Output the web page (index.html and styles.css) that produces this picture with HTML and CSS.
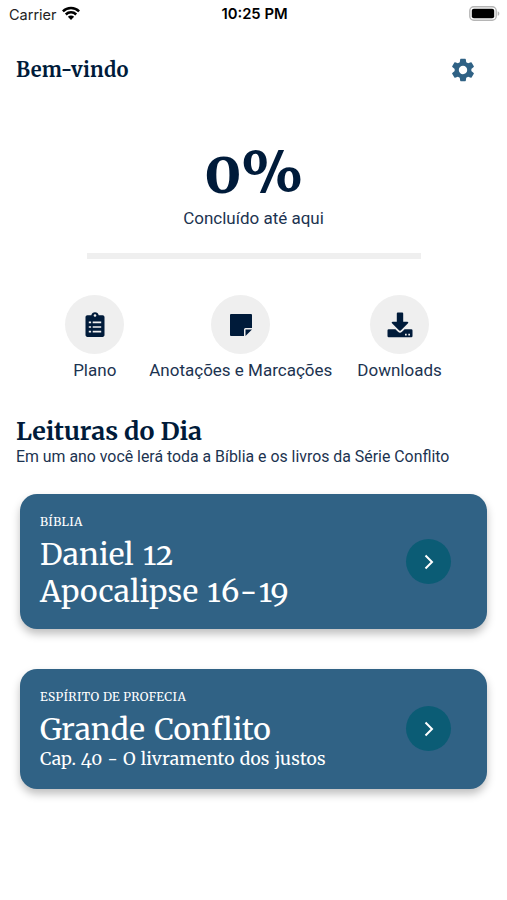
FILE: index.html
```html
<!DOCTYPE html>
<html lang="pt-BR">
<head>
  <meta charset="UTF-8">
  <meta name="viewport" content="width=device-width, initial-scale=1">
  <title>Bem-vindo</title>
  <link rel="stylesheet" href="styles.css">
</head>
<body>
  <div class="statusbar">
    <div class="carrier">
      <span>Carrier</span>
      <svg class="wifi" viewBox="0 0 18 14" fill="none" stroke="#000" stroke-width="2.5">
        <path d="M.9 5.3a11.5 11.5 0 0 1 16.2 0"/>
        <path d="M3.8 8.5a7.4 7.4 0 0 1 10.4 0"/>
        <path d="M9 14 5.9 10.8a4.4 4.4 0 0 1 6.2 0z" fill="#000" stroke="none"/>
      </svg>
    </div>
    <span class="time">10:25 PM</span>
    <svg class="battery" viewBox="0 0 31 15">
      <rect x=".8" y=".8" width="26.4" height="13.4" rx="4" fill="#fff" stroke="#b5b5b5" stroke-width="1.4"/>
      <rect x="2.8" y="2.8" width="22.4" height="9.4" rx="2" fill="#000"/>
      <path d="M28.7 5.2c2.2.9 2.2 3.7 0 4.6z" fill="#b5b5b5"/>
    </svg>
  </div>

  <header class="header">
    <h1>Bem-vindo</h1>
    <svg class="gear" viewBox="0 0 24 24" fill="#306285">
      <path d="M19.14 12.94c.04-.3.06-.61.06-.94 0-.32-.02-.64-.07-.94l2.03-1.58a.49.49 0 0 0 .12-.61l-1.92-3.32a.488.488 0 0 0-.59-.22l-2.39.96c-.5-.38-1.03-.7-1.62-.94l-.36-2.54a.484.484 0 0 0-.48-.41h-3.84c-.24 0-.43.17-.47.41l-.36 2.54c-.59.24-1.13.57-1.62.94l-2.39-.96c-.22-.08-.47 0-.59.22L2.74 8.87c-.12.21-.08.47.12.61l2.03 1.58c-.05.3-.09.63-.09.94s.02.64.07.94l-2.03 1.58a.49.49 0 0 0-.12.61l1.92 3.32c.12.22.37.29.59.22l2.39-.96c.5.38 1.03.7 1.62.94l.36 2.54c.05.24.24.41.48.41h3.84c.24 0 .44-.17.47-.41l.36-2.54c.59-.24 1.13-.56 1.62-.94l2.39.96c.22.08.47 0 .59-.22l1.92-3.32c.12-.22.07-.47-.12-.61l-2.01-1.58zM12 15.6A3.61 3.61 0 0 1 8.4 12c0-1.98 1.62-3.6 3.6-3.6s3.6 1.62 3.6 3.6-1.62 3.6-3.6 3.6z"/>
    </svg>
  </header>

  <section class="progress">
    <div class="percent">0%</div>
    <div class="done">Concluído até aqui</div>
    <div class="track"></div>
  </section>

  <nav class="menu">
    <div class="item">
      <div class="circle">
        <svg width="20" height="26" viewBox="0 0 20 26">
          <path fill="#001b3a" d="M2.4 3.2h3.9a3.8 3.8 0 0 1 7.4 0h3.9c1.1 0 1.9.8 1.9 1.9v18c0 1.1-.8 1.9-1.9 1.9H2.4C1.3 25 .5 24.2.5 23.1v-18c0-1.1.8-1.9 1.9-1.9z"/>
          <circle cx="10" cy="3.5" r="1.3" fill="#efefef"/>
          <path stroke="#efefef" stroke-width="1.7" d="M3.8 10.3h2.3M7.7 10.3h8.5M3.8 15h2.3M7.7 15h8.5M3.8 19.7h2.3M7.7 19.7h8.5"/>
        </svg>
      </div>
      <span>Plano</span>
    </div>
    <div class="item">
      <div class="circle">
        <svg width="22" height="22" viewBox="0 0 22 22" fill="#001b3a">
          <path d="M1 0h20q1 0 1 1v13h-6.5q-1.5 0-1.5 1.5V22H1q-1 0-1-1V1q0-1 1-1z"/>
          <path d="M15.5 15.5H22L15.5 22z"/>
        </svg>
      </div>
      <span>Anotações e Marcações</span>
    </div>
    <div class="item">
      <div class="circle">
        <svg width="26" height="26" viewBox="0 0 26 26" fill="#001b3a">
          <path d="M10.8.5h4.4q1 0 1 1v8.2h4.1c1 0 1.3.9.7 1.5l-7.2 7.2q-.8.8-1.6 0L5 11.2c-.6-.6-.3-1.5.7-1.5h4.1V1.5q0-1 1-1z"/>
          <path d="M1.7 17.3h6.7l2.6 2.5q2 1.8 4 0l2.6-2.5h6.7q1.2 0 1.2 1.2v5.6q0 1.2-1.2 1.2H1.7q-1.2 0-1.2-1.2v-5.6q0-1.2 1.2-1.2z"/>
          <path fill="#efefef" d="M18 21.7h1.7v1.7H18zM21.3 21.7H23v1.7h-1.7z"/>
        </svg>
      </div>
      <span>Downloads</span>
    </div>
  </nav>

  <section class="readings">
    <h2>Leituras do Dia</h2>
    <p class="intro">Em um ano você lerá toda a Bíblia e os livros da Série Conflito</p>

    <article class="card bible">
      <div class="text">
        <div class="label">BÍBLIA</div>
        <div class="title">Daniel 12<br>Apocalipse 1<span class="range">6-</span>19</div>
      </div>
      <div class="go">
        <svg viewBox="0 0 10 16"><path d="M1.5 1.5 8 8l-6.5 6.5"/></svg>
      </div>
    </article>

    <article class="card prophecy">
      <div class="text">
        <div class="label">ESPÍRITO DE PROFECIA</div>
        <div class="title">Grande Conflito</div>
        <div class="chapter">Cap. 40 - O livramento dos justos</div>
      </div>
      <div class="go">
        <svg viewBox="0 0 10 16"><path d="M1.5 1.5 8 8l-6.5 6.5"/></svg>
      </div>
    </article>
  </section>
</body>
</html>
```
FILE: styles.css
```css
* { box-sizing: border-box; }
body { margin: 0; background: #fff; color: #001b3a; font-family: Roboto, sans-serif; }
h1, h2, p { margin: 0; }
svg { display: block; }
h1, h2, .percent, .card { font-family: Merriweather, "DejaVu Serif Condensed", "DejaVu Serif", serif; font-variant-numeric: oldstyle-nums; }

.statusbar { display: grid; grid-template-columns: 1fr auto 1fr; align-items: center; height: 28px; padding: 0 7px 0 9px; color: #000; font-family: Inter, sans-serif; font-size: 14.5px; }
.carrier { display: flex; align-items: center; gap: 5px; color: #222; }
.wifi { width: 18px; height: 14px; margin-top: -2px; }
.time { font-weight: 600; font-size: 14.8px; }
.battery { width: 31px; height: 15px; margin-top: -2px; justify-self: end; }

.header { display: flex; justify-content: space-between; align-items: center; height: 83px; padding: 0 30px 0 16px; }
h1 { font-size: 20px; line-height: 28px; letter-spacing: 0.25px; }
.gear { width: 28px; height: 28px; }

.progress { display: flex; flex-direction: column; align-items: center; padding-top: 27px; }
.percent { height: 69px; font-size: 58px; line-height: 69px; font-weight: 800; }
.done { font-size: 17px; line-height: 22px; color: #1c3350; }
.track { width: 334px; height: 6px; margin-top: 24px; background: #efefef; }

.menu { display: flex; justify-content: center; gap: 25px; margin-top: 36px; }
.item { display: flex; flex-direction: column; align-items: center; font-size: 17px; line-height: 22px; min-width: 58px; color: #1c3350; }
.circle { display: flex; align-items: center; justify-content: center; width: 59px; height: 59px; margin-bottom: 5px; border-radius: 50%; background: #efefef; }

.readings { padding: 34px 16px 30px; }
h2 { font-size: 25px; line-height: 32px; }
.intro { font-size: 15.87px; line-height: 18px; padding-top: 1px; color: #1c3350; }
.card { display: flex; justify-content: space-between; margin: 0 4px; padding: 18px 36px 0 20px; border-radius: 17px; background: #306285; color: #fff; box-shadow: 0 5px 8px rgba(0, 0, 0, 0.25); }
.bible { height: 135px; margin-top: 28px; }
.prophecy { height: 120px; margin-top: 40px; }
.label { font-size: 12px; line-height: 20px; letter-spacing: 0.4px; font-weight: 450; white-space: nowrap; }
.title { margin-top: 4px; font-size: 30px; line-height: 37px; letter-spacing: 0.1px; word-spacing: 2px; white-space: nowrap; }
.range { letter-spacing: 1.5px; }
.chapter { font-size: 17.5px; line-height: 22px; letter-spacing: 0.15px; word-spacing: 0.8px; font-weight: 450; white-space: nowrap; }
.go { display: flex; align-items: center; justify-content: center; width: 45px; height: 45px; margin-top: 27px; border-radius: 50%; background: #0b5c75; }
.prophecy .go { margin-top: 19px; }
.go svg { width: 10px; height: 16px; fill: none; stroke: #fff; stroke-width: 2; }
```
